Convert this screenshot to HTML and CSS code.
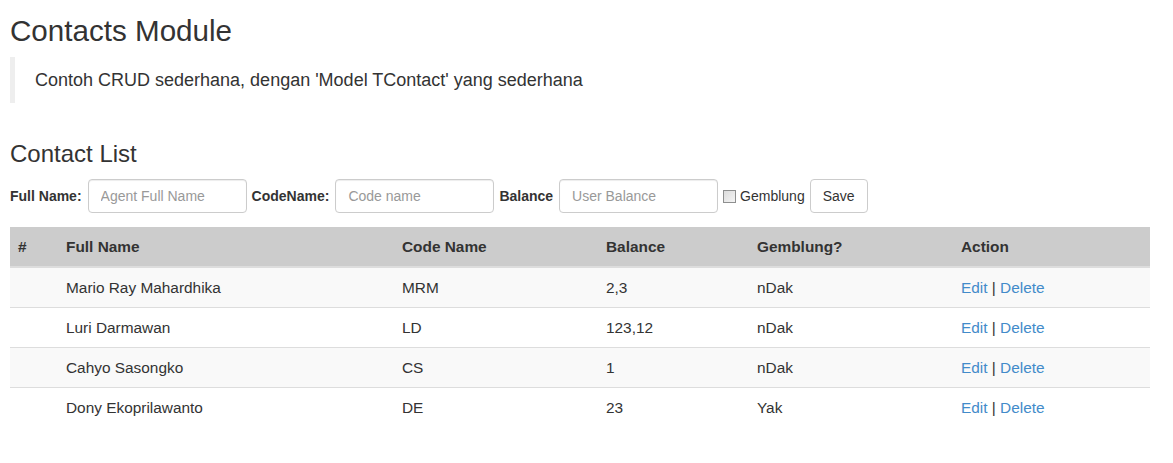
FILE: index.html
```html
<!DOCTYPE html>
<html>
<head>
<meta charset="utf-8">
<title>Contacts Module</title>
<link rel="stylesheet" href="styles.css">
</head>
<body>
<div class="container">
  <h1 class="page-title">Contacts Module</h1>
  <blockquote class="intro">Contoh CRUD sederhana, dengan 'Model TContact' yang sederhana</blockquote>

  <h3 class="section-title">Contact List</h3>
  <form class="inline-form">
    <label class="field-label">Full Name:</label>
    <input class="text-input" type="text" placeholder="Agent Full Name">
    <label class="field-label">CodeName:</label>
    <input class="text-input" type="text" placeholder="Code name">
    <label class="field-label">Balance</label>
    <input class="text-input" type="text" placeholder="User Balance">
    <label class="check-label"><input class="check" type="checkbox"> Gemblung</label>
    <button class="btn" type="button">Save</button>
  </form>

  <table class="contacts">
    <thead>
      <tr>
        <th class="c-num">#</th>
        <th class="c-name">Full Name</th>
        <th class="c-code">Code Name</th>
        <th class="c-bal">Balance</th>
        <th class="c-gem">Gemblung?</th>
        <th class="c-act">Action</th>
      </tr>
    </thead>
    <tbody>
      <tr>
        <td></td><td>Mario Ray Mahardhika</td><td>MRM</td><td>2,3</td><td>nDak</td>
        <td><a href="#">Edit</a> | <a href="#">Delete</a></td>
      </tr>
      <tr>
        <td></td><td>Luri Darmawan</td><td>LD</td><td>123,12</td><td>nDak</td>
        <td><a href="#">Edit</a> | <a href="#">Delete</a></td>
      </tr>
      <tr>
        <td></td><td>Cahyo Sasongko</td><td>CS</td><td>1</td><td>nDak</td>
        <td><a href="#">Edit</a> | <a href="#">Delete</a></td>
      </tr>
      <tr>
        <td></td><td>Dony Ekoprilawanto</td><td>DE</td><td>23</td><td>Yak</td>
        <td><a href="#">Edit</a> | <a href="#">Delete</a></td>
      </tr>
    </tbody>
  </table>
</div>
</body>
</html>
```

FILE: styles.css
```css
* { box-sizing: border-box; }

html, body {
  margin: 0;
  padding: 0;
  background: #fff;
}

body {
  font-family: "Liberation Sans", Arial, Helvetica, sans-serif;
  font-size: 14px;
  color: #333;
}

.container {
  padding: 0 10px;
  width: 1160px;
}

.page-title {
  margin: 14px 0 10px;
  font-size: 29.6px;
  font-weight: 400;
  line-height: 33px;
}

.intro {
  margin: 0;
  padding: 10px 20px;
  border-left: 5px solid #eee;
  font-size: 18px;
  line-height: 26px;
}

.section-title {
  margin: 38px 0 12px;
  font-size: 24px;
  font-weight: 400;
  line-height: 26px;
}

.inline-form {
  display: flex;
  align-items: center;
  height: 34px;
  margin: 0 0 14px;
}

.field-label {
  font-weight: 700;
  font-size: 14px;
  margin-right: 6px;
}

.text-input {
  width: 159px;
  height: 34px;
  padding: 6px 12px;
  font-family: inherit;
  font-size: 14px;
  color: #555;
  border: 1px solid #ccc;
  border-radius: 4px;
  box-shadow: inset 0 1px 1px rgba(0,0,0,.075);
  margin-right: 5px;
}

.text-input::placeholder { color: #999; }

.check-label {
  display: flex;
  align-items: center;
  gap: 4px;
  font-size: 14px;
  margin-right: 5px;
}

.check {
  appearance: none;
  -webkit-appearance: none;
  width: 13px;
  height: 13px;
  margin: 0;
  border: 1px solid #8e8f8f;
  background: linear-gradient(135deg, #dcdcdc, #f4f4f4);
}

.btn {
  height: 34px;
  padding: 6px 12px;
  font-family: inherit;
  font-size: 14px;
  color: #333;
  background: #fff;
  border: 1px solid #ccc;
  border-radius: 4px;
}

.contacts {
  width: 1140px;
  border-collapse: collapse;
  table-layout: fixed;
  font-size: 15.4px;
}

.contacts th,
.contacts td {
  padding: 8px;
  line-height: 23px;
  text-align: left;
  vertical-align: top;
}

.contacts th {
  background: #ccc;
  font-weight: 700;
  border-bottom: 2px solid #ddd;
}

.contacts td {
  border-top: 1px solid #ddd;
}

.contacts thead + tbody tr:first-child td { border-top: 0; }

.contacts tbody tr:nth-child(odd) td { background: #f9f9f9; }

.c-num { width: 48px; }
.c-name { width: 336px; }
.c-code { width: 204px; }
.c-bal { width: 151px; }
.c-gem { width: 204px; }
.c-act { width: 197px; }

.contacts a {
  color: #428bca;
  text-decoration: none;
}
```
